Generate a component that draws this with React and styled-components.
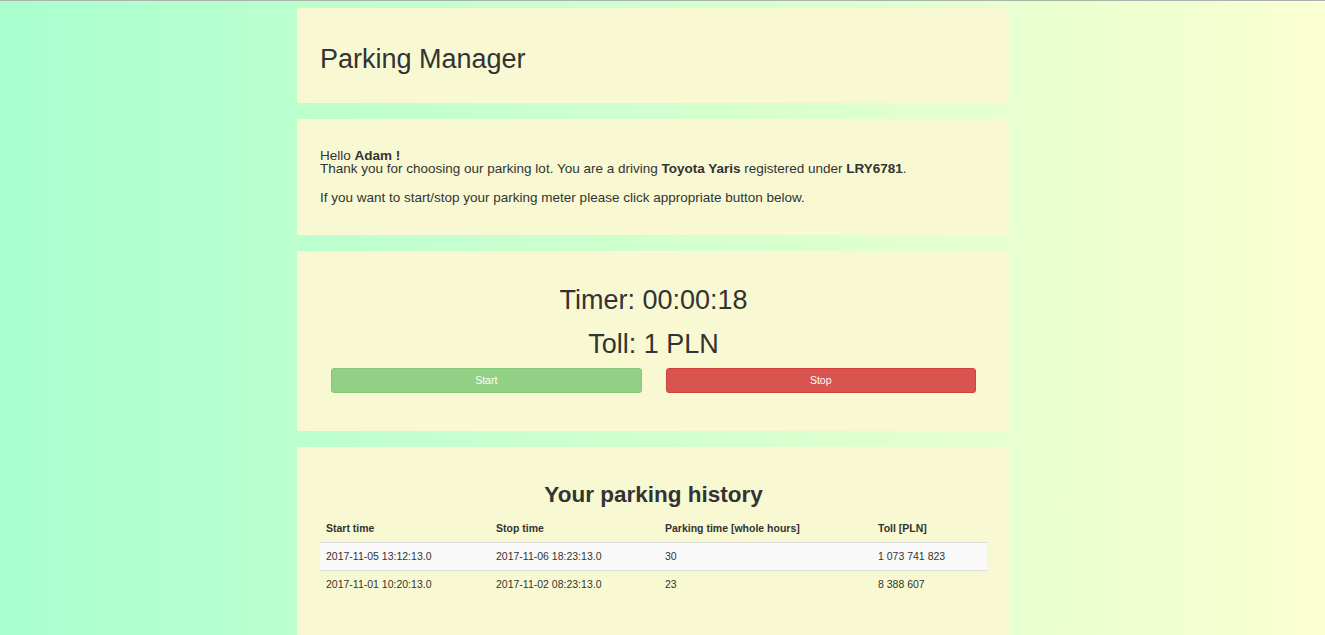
import React from 'react'
import styled, { createGlobalStyle } from 'styled-components'

const GlobalStyle = createGlobalStyle`
  html, body {
    margin: 0;
    padding: 0;
  }
  body {
    font-family: "Liberation Sans", Arial, Helvetica, sans-serif;
    color: #333;
    background: linear-gradient(to right, #a9ffce 0%, #fbffd1 100%);
    min-height: 100vh;
  }
  * {
    box-sizing: border-box;
  }
`

const history = [
  { start: '2017-11-05 13:12:13.0', stop: '2017-11-06 18:23:13.0', hours: 30, toll: '1 073 741 823' },
  { start: '2017-11-01 10:20:13.0', stop: '2017-11-02 08:23:13.0', hours: 23, toll: '8 388 607' },
]

const App = () => {
  return (
    <Page>
      <GlobalStyle />
      <Container>
        <Card $pad="37px 23px 28px">
          <Title>Parking Manager</Title>
        </Card>

        <Card $pad="30px 23px 31px">
          <Text $gap="15px">
            Hello <b>Adam !</b>
            <br />
            Thank you for choosing our parking lot. You are a driving <b>Toyota Yaris</b> registered
            under <b>LRY6781</b>.
          </Text>
          <Text>If you want to start/stop your parking meter please click appropriate button below.</Text>
        </Card>

        <Card $pad="35px 23px 38px">
          <Meter>Timer: 00:00:18</Meter>
          <Meter $top="14px">Toll: 1 PLN</Meter>
          <Buttons>
            <Button $variant="start" disabled>Start</Button>
            <Button $variant="stop">Stop</Button>
          </Buttons>
        </Card>

        <Card $pad="36px 23px 60px">
          <Heading>Your parking history</Heading>
          <Table>
            <colgroup>
              <col style={{ width: 170 }} />
              <col style={{ width: 169 }} />
              <col style={{ width: 213 }} />
              <col />
            </colgroup>
            <thead>
              <tr>
                <Th>Start time</Th>
                <Th>Stop time</Th>
                <Th>Parking time [whole hours]</Th>
                <Th>Toll [PLN]</Th>
              </tr>
            </thead>
            <tbody>
              {history.map((row, i) => (
                <Row key={i} $striped={i % 2 === 0}>
                  <Td>{row.start}</Td>
                  <Td>{row.stop}</Td>
                  <Td>{row.hours}</Td>
                  <Td>{row.toll}</Td>
                </Row>
              ))}
            </tbody>
          </Table>
        </Card>
      </Container>
    </Page>
  )
}

const Page = styled.div`
  min-height: 100vh;
  border-top: 1px solid #a9b3a9;
  padding: 7px 18px 0 0;
  display: flex;
  justify-content: center;
`

const Container = styled.div`
  width: 713px;
  display: flex;
  flex-direction: column;
  gap: 16px;
`

const Card = styled.section`
  background: #f8f9d2;
  padding: ${(p) => p.$pad};
`

const Title = styled.h1`
  margin: 0;
  font-size: 27px;
  line-height: 1.1;
  font-weight: 400;
`

const Text = styled.p`
  margin: 0 0 ${(p) => p.$gap || '0'};
  font-size: 13.5px;
  line-height: 13.5px;
`

const Meter = styled.h1`
  margin: ${(p) => p.$top || '0'} 0 0;
  font-size: 27px;
  line-height: 1.1;
  font-weight: 400;
  text-align: center;
`

const Buttons = styled.div`
  display: grid;
  grid-template-columns: 1fr 1fr;
  gap: 24px;
  padding: 0 11px;
  margin-top: 8px;
`

const Button = styled.button`
  height: 25px;
  font-family: inherit;
  font-size: 10.5px;
  color: #fff;
  border-radius: 3px;
  cursor: pointer;
  border: 1px solid ${(p) => (p.$variant === 'stop' ? '#d43f3a' : '#86c77a')};
  background: ${(p) => (p.$variant === 'stop' ? '#d9534f' : '#92d085')};
  &:disabled {
    cursor: not-allowed;
  }
`

const Heading = styled.h2`
  margin: 0 0 8px;
  font-size: 22.5px;
  line-height: 1.1;
  font-weight: 700;
  text-align: center;
`

const Table = styled.table`
  width: 100%;
  table-layout: fixed;
  border-collapse: collapse;
  font-size: 10.5px;
`

const Th = styled.th`
  text-align: left;
  font-weight: 700;
  padding: 6px;
  line-height: 15px;
  border-bottom: 1px solid #ddd;
`

const Row = styled.tr`
  background: ${(p) => (p.$striped ? '#f9f9f9' : 'transparent')};
`

const Td = styled.td`
  padding: 6px;
  line-height: 15px;
  border-top: 1px solid #ddd;
`

export default App
